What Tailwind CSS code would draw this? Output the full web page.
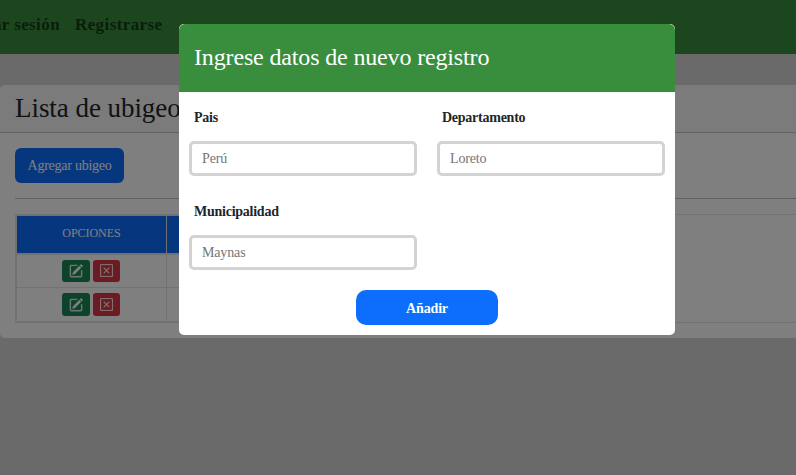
<!DOCTYPE html>
<html lang="es">
<head>
<meta charset="utf-8">
<title>Lista de ubigeo</title>
<script src="https://cdn.jsdelivr.net/npm/@tailwindcss/browser@4"></script>
</head>
<body class="h-[475px] overflow-hidden bg-[#d5d5d5] font-['Liberation_Serif',serif] text-[#212529]">
<svg class="hidden">
  <symbol id="pencil" viewBox="0 0 16 16"><path d="M15.502 1.94a.5.5 0 0 1 0 .706L14.459 3.69l-2-2L13.502.646a.5.5 0 0 1 .707 0l1.293 1.293zm-1.75 2.456-2-2L4.939 9.21a.5.5 0 0 0-.121.196l-.805 2.414a.25.25 0 0 0 .316.316l2.414-.805a.5.5 0 0 0 .196-.12l6.813-6.814z"/><path fill-rule="evenodd" d="M1 13.5A1.5 1.5 0 0 0 2.5 15h11a1.5 1.5 0 0 0 1.5-1.5v-6a.5.5 0 0 0-1 0v6a.5.5 0 0 1-.5.5h-11a.5.5 0 0 1-.5-.5v-11a.5.5 0 0 1 .5-.5H9a.5.5 0 0 0 0-1H2.500A1.500 1.500 0 0 0 1 2.500v11z"/></symbol>
  <symbol id="xsquare" viewBox="0 0 16 16"><path d="M14 1a1 1 0 0 1 1 1v12a1 1 0 0 1-1 1H2a1 1 0 0 1-1-1V2a1 1 0 0 1 1-1h12zM2 0a2 2 0 0 0-2 2v12a2 2 0 0 0 2 2h12a2 2 0 0 0 2-2V2a2 2 0 0 0-2-2H2z"/><path d="M4.646 4.646a.5.5 0 0 1 .708 0L8 7.293l2.646-2.647a.5.5 0 0 1 .708.708L8.707 8l2.647 2.646a.5.5 0 0 1-.708.708L8 8.707l-2.646 2.647a.5.5 0 0 1-.708-.708L7.293 8 4.646 5.354a.5.5 0 0 1 0-.708z"/></symbol>
</svg>

<nav class="flex h-[54px] w-full items-center overflow-hidden bg-[#388e3c] pb-[5px] text-[17px] font-bold tracking-[0.4px] text-[#173a19]">
  <div class="flex w-[60px] shrink-0 justify-end whitespace-nowrap">Iniciar sesión</div>
  <div class="ml-[15px]">Registrarse</div>
</nav>

<main class="mt-[31px] h-[253px] w-[820px] overflow-hidden rounded-[5px] bg-white">
  <header class="flex h-12 items-center border-b border-[#c4c4c4] bg-[#f7f7f7] px-[15px] pb-px">
    <h1 class="text-[27px] leading-[32px] tracking-[-0.05px]">Lista de ubigeos</h1>
  </header>
  <div class="px-[15px] pt-[15px]">
    <button class="flex h-[35px] w-[109px] items-center justify-center rounded-[6px] bg-[#0d6efd] text-[14px] tracking-[-0.25px] text-white">Agregar ubigeo</button>
    <hr class="mt-[15px] border-[#c0c0c0]">
    <div class="mt-[15px] h-[109px] border border-[#dee2e6]">
      <table class="w-[600px] table-fixed border-collapse border border-[#dee2e6]">
        <thead>
          <tr class="h-[38px] border-b-2 border-[#dee2e6] bg-[#0d6efd] text-[12px] text-white">
            <th class="w-[150px] border-r border-[#dee2e6] pb-[2px] font-normal tracking-[-0.05px]">OPCIONES</th>
            <th class="font-normal">PAIS</th>
          </tr>
        </thead>
        <tbody>
          <tr class="h-[34px] border-b border-[#dee2e6]">
            <td class="border-r border-[#dee2e6] p-0 pr-[2px]">
              <div class="flex justify-center gap-[3px]">
                <button class="flex h-[22px] w-[28px] items-center justify-center rounded-[3px] bg-[#198754] text-white"><svg class="size-[14px] fill-current stroke-current stroke-[0.4]"><use href="#pencil"/></svg></button>
                <button class="flex h-[22px] w-[27px] items-center justify-center rounded-[3px] bg-[#dc3545] text-white"><svg class="size-[13px] fill-current stroke-current stroke-[0.4]"><use href="#xsquare"/></svg></button>
              </div>
            </td>
            <td></td>
          </tr>
          <tr class="h-[34px]">
            <td class="border-r border-[#dee2e6] p-0 pr-[2px]">
              <div class="flex justify-center gap-[3px]">
                <button class="flex h-[23px] w-[28px] items-center justify-center rounded-[3px] bg-[#198754] text-white"><svg class="size-[14px] fill-current stroke-current stroke-[0.4]"><use href="#pencil"/></svg></button>
                <button class="flex h-[23px] w-[27px] items-center justify-center rounded-[3px] bg-[#dc3545] text-white"><svg class="size-[13px] fill-current stroke-current stroke-[0.4]"><use href="#xsquare"/></svg></button>
              </div>
            </td>
            <td></td>
          </tr>
        </tbody>
      </table>
    </div>
  </div>
</main>

<div class="fixed inset-0 bg-black/50 pt-6 pl-[179px]">
  <section role="dialog" class="h-[311px] w-[496px] rounded-[5px] bg-white">
    <header class="flex h-[68px] items-center rounded-t-[6px] bg-[#388e3c] px-[15px] pb-[2px]">
      <h2 class="text-[24px] tracking-[-0.15px] text-white">Ingrese datos de nuevo registro</h2>
    </header>
    <form class="px-[10px] pt-4">
      <div class="grid grid-cols-[228px_228px] gap-x-5 gap-y-[26px]">
        <label class="block text-[14px] leading-5 font-bold tracking-[-0.25px]"><span class="block pl-[5px]">Pais</span>
          <input placeholder="Perú" class="mt-[13px] block h-[35px] w-full rounded-[5px] border-3 border-[#d3d3d3] px-[10px] text-[14px] font-normal tracking-[-0.15px] placeholder:text-[#757575]">
        </label>
        <label class="block text-[14px] leading-5 font-bold tracking-[-0.25px]"><span class="block pl-[5px]">Departamento</span>
          <input placeholder="Loreto" class="mt-[13px] block h-[35px] w-full rounded-[5px] border-3 border-[#d3d3d3] px-[10px] text-[14px] font-normal tracking-[-0.15px] placeholder:text-[#757575]">
        </label>
        <label class="block text-[14px] leading-5 font-bold tracking-[-0.25px]"><span class="block pl-[5px]">Municipalidad</span>
          <input placeholder="Maynas" class="mt-[13px] block h-[35px] w-full rounded-[5px] border-3 border-[#d3d3d3] px-[10px] text-[14px] font-normal tracking-[-0.15px] placeholder:text-[#757575]">
        </label>
      </div>
      <button type="button" class="mx-auto mt-5 flex h-[35px] w-[142px] items-center justify-center rounded-[10px] bg-[#0d6efd] pt-[2px] text-[14px] font-bold tracking-[-0.15px] text-white">Añadir</button>
    </form>
  </section>
</div>
</body>
</html>
